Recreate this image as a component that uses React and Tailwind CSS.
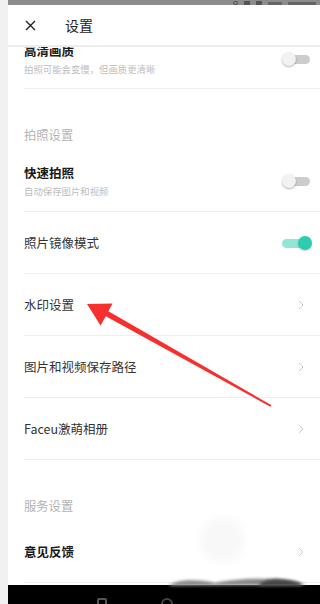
import React from "react";

const font = { fontFamily: '"Noto Sans CJK SC", "Noto Sans", sans-serif' };

function Toggle({ on }) {
  if (on) {
    return (
      <div className="relative w-[28px] h-[14px] mr-[10px]">
        <div className="absolute left-0 right-[2px] top-[3px] h-[9px] rounded-full bg-[#93e6d6]" />
        <div className="absolute right-[-2px] top-0 w-[14px] h-[14px] rounded-full bg-[#2dcdb0] shadow-[0_1px_2px_rgba(0,0,0,0.2)]" />
      </div>
    );
  }
  return (
    <div className="relative w-[28px] h-[14px] mr-[10px]">
      <div className="absolute left-[3px] right-0 top-[3px] h-[9px] rounded-full bg-[#cccccc]" />
      <div className="absolute left-0 top-0 w-[14px] h-[14px] rounded-full bg-[#f2f2f2] shadow-[0_1px_2px_rgba(0,0,0,0.3)]" />
    </div>
  );
}

function Chevron() {
  return (
    <svg width="6" height="10" viewBox="0 0 6 10" className="mr-[16px]">
      <path d="M1 1 L5 5 L1 9" fill="none" stroke="#c8c8c8" strokeWidth="1" />
    </svg>
  );
}

function Row({ title, sub, right, bold, className = "" }) {
  return (
    <div className={"ml-[16px] h-[62px] border-b border-[#efefef] flex items-center justify-between " + className}>
      <div className="flex flex-col">
        <div className={"text-[12.5px] leading-[16px] " + (bold ? "text-[#1a1a1a] font-semibold" : "text-[#333]")}>{title}</div>
        {sub && <div className="text-[9.4px] leading-[12px] mt-[4px] text-[#bdbdbd]">{sub}</div>}
      </div>
      {right}
    </div>
  );
}

function Section({ title }) {
  return (
    <div className="ml-[16px] h-[61px] pt-[38px]">
      <div className="text-[12.3px] leading-[16px] text-[#b3b3b3]">{title}</div>
    </div>
  );
}

export default function App() {
  return (
    <div className="relative w-[320px] h-[604px] overflow-hidden bg-white flex" style={font}>
      <div className="w-[8px] h-full bg-[#f1f1f1] shrink-0" />
      <div className="flex-1 flex flex-col min-w-0">
        {/* status bar */}
        <div className="h-[5px] bg-[#8c8c8c] flex items-end justify-end gap-[6px] pr-[4px] shrink-0">
          <div className="w-[5px] h-[4px] rounded-full border border-[#555]" />
          <div className="w-[6px] h-[4px] bg-[#555]" />
          <div className="w-[6px] h-[4px] bg-[#555]" />
          <div className="w-[14px] h-[3px] bg-[#666]" />
          <div className="w-[28px] h-[3px] bg-[#666]" />
        </div>
        {/* header */}
        <div className="h-[42px] flex items-center border-b-2 border-[#eeeeee] shrink-0">
          <svg width="11" height="11" viewBox="0 0 11 11" className="ml-[17px]">
            <path d="M1 1 L10 10 M10 1 L1 10" stroke="#222" strokeWidth="1.4" />
          </svg>
          <div className="ml-[29px] text-[14px] text-[#222]">设置</div>
        </div>
        {/* content */}
        <div className="flex-1 overflow-hidden">
          <div className="mt-[-20px]">
            <Row title="高清画质" sub="拍照可能会变慢，但画质更清晰" bold className="pt-[2px]" right={<Toggle />} />
            <Section title="拍照设置" />
            <Row title="快速拍照" sub="自动保存图片和视频" bold right={<Toggle />} />
            <Row title="照片镜像模式" right={<Toggle on />} />
            <Row title="水印设置" right={<Chevron />} />
            <Row title="图片和视频保存路径" right={<Chevron />} />
            <Row title="Faceu激萌相册" right={<Chevron />} />
            <Section title="服务设置" />
            <Row title="意见反馈" bold right={<Chevron />} />
          </div>
        </div>
        {/* nav bar */}
        <div className="h-[19px] bg-black relative shrink-0">
          <div className="absolute left-[89px] top-[13px] w-[10px] h-[10px] border-2 border-[#555] rounded-[2px]" />
          <div className="absolute left-[153px] top-[13px] w-[12px] h-[12px] border-2 border-[#444] rounded-full" />
        </div>
      </div>

      {/* blurry watermark */}
      <svg className="absolute left-0 top-0 pointer-events-none" width="320" height="604">
        <defs>
          <filter id="b" x="-50%" y="-50%" width="200%" height="200%">
            <feGaussianBlur stdDeviation="4" />
          </filter>
          <filter id="b2" x="-50%" y="-50%" width="200%" height="200%">
            <feGaussianBlur stdDeviation="1.5" />
          </filter>
        </defs>
        <circle cx="222" cy="540" r="22" fill="#f8f8f8" filter="url(#b)" />
        <path d="M168 586 C180 578 200 580 215 583 C230 580 250 578 265 579 C280 578 295 580 306 585 Z" fill="#888" filter="url(#b2)" />
        <path d="M258 586 C262 578 285 578 300 583 L302 586 Z" fill="#444" filter="url(#b2)" />
      </svg>

      {/* red arrow */}
      <svg className="absolute left-0 top-0 pointer-events-none" width="320" height="604">
        <polygon
          points="87,304 112.5,303.5 108.4,311.2 271.6,405.3 270.4,406.7 105.8,316.2 100.5,325.5"
          fill="#f5302f"
        />
      </svg>
    </div>
  );
}
